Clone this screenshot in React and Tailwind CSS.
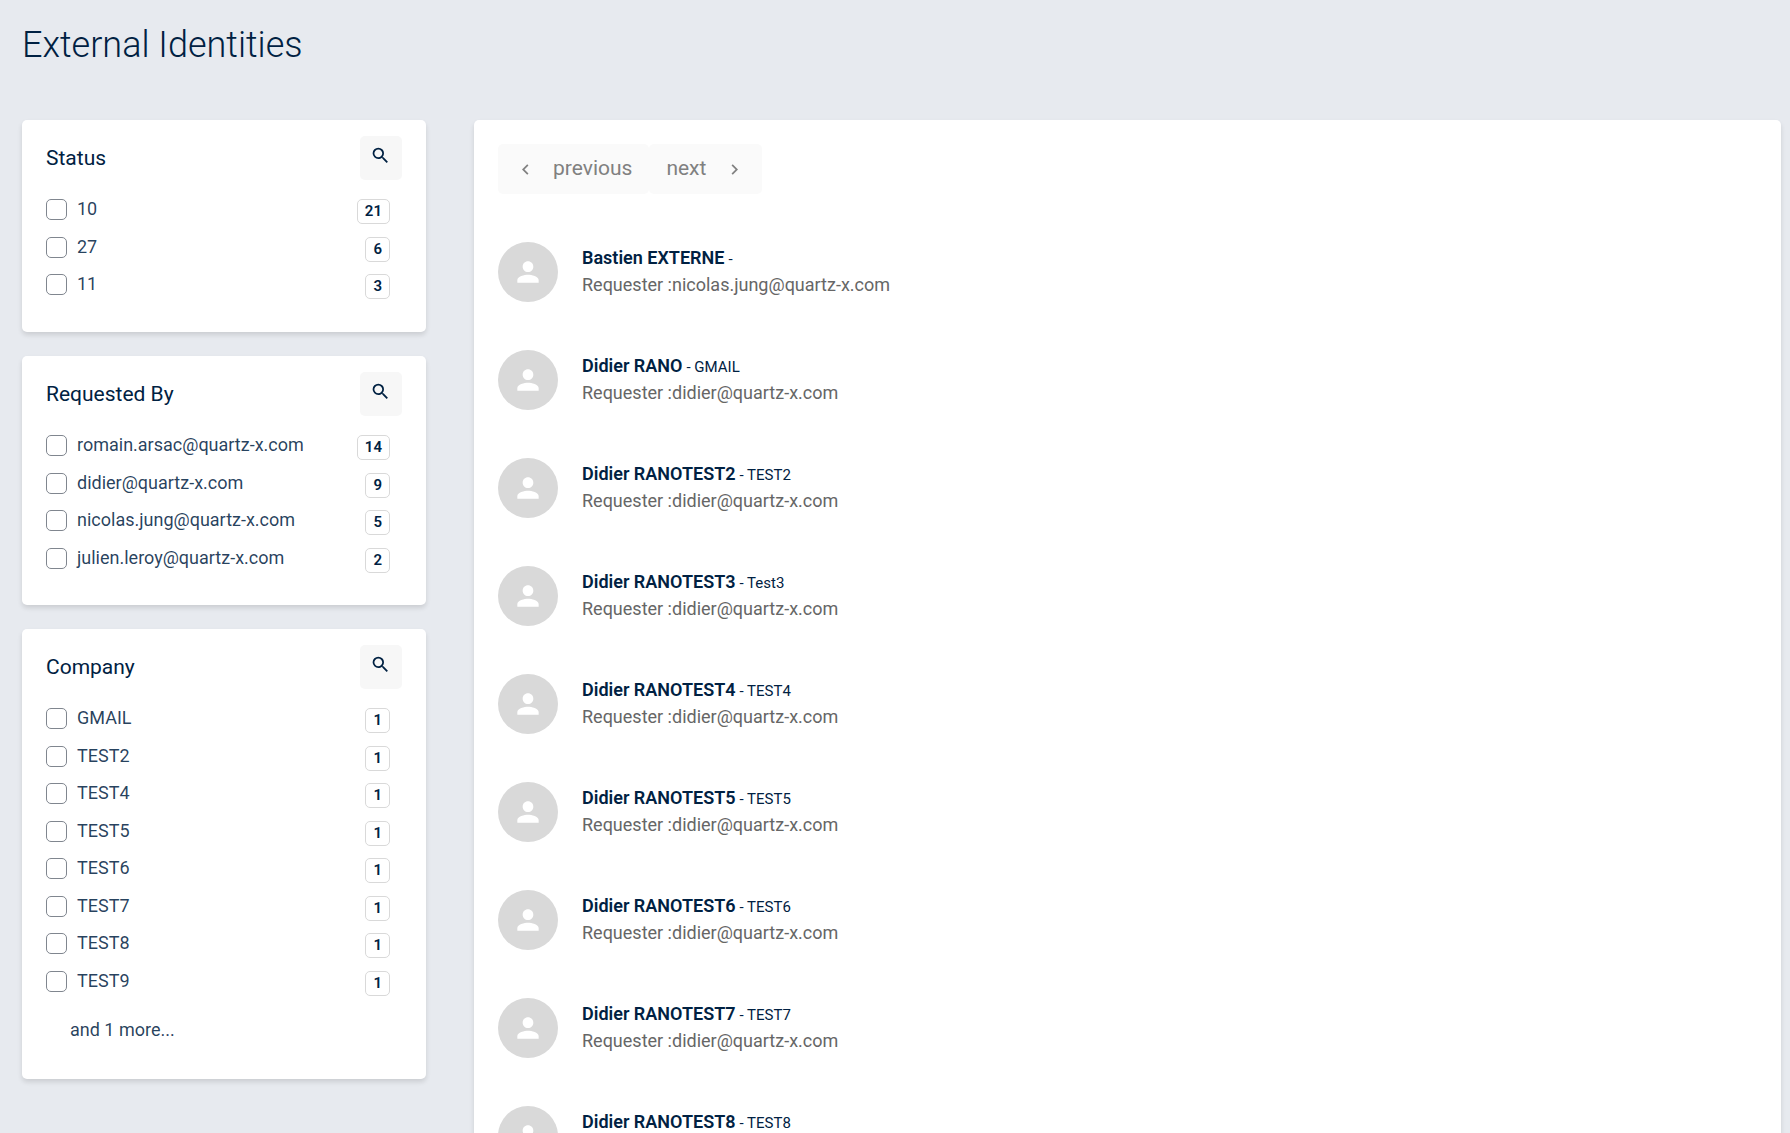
import React, { useState } from 'react';
import { MdSearch, MdPerson, MdChevronLeft, MdChevronRight } from 'react-icons/md';

const facets = [
    {
        title: 'Status',
        values: [
            { name: '10', count: 21 },
            { name: '27', count: 6 },
            { name: '11', count: 3 },
        ],
    },
    {
        title: 'Requested By',
        values: [
            { name: 'romain.arsac@quartz-x.com', count: 14 },
            { name: 'didier@quartz-x.com', count: 9 },
            { name: 'nicolas.jung@quartz-x.com', count: 5 },
            { name: 'julien.leroy@quartz-x.com', count: 2 },
        ],
    },
    {
        title: 'Company',
        values: [
            { name: 'GMAIL', count: 1 },
            { name: 'TEST2', count: 1 },
            { name: 'TEST4', count: 1 },
            { name: 'TEST5', count: 1 },
            { name: 'TEST6', count: 1 },
            { name: 'TEST7', count: 1 },
            { name: 'TEST8', count: 1 },
            { name: 'TEST9', count: 1 },
        ],
        more: 'and 1 more...',
    },
];

const identities = [
    { name: 'Bastien EXTERNE', company: '', requester: 'nicolas.jung@quartz-x.com' },
    { name: 'Didier RANO', company: 'GMAIL', requester: 'didier@quartz-x.com' },
    { name: 'Didier RANOTEST2', company: 'TEST2', requester: 'didier@quartz-x.com' },
    { name: 'Didier RANOTEST3', company: 'Test3', requester: 'didier@quartz-x.com' },
    { name: 'Didier RANOTEST4', company: 'TEST4', requester: 'didier@quartz-x.com' },
    { name: 'Didier RANOTEST5', company: 'TEST5', requester: 'didier@quartz-x.com' },
    { name: 'Didier RANOTEST6', company: 'TEST6', requester: 'didier@quartz-x.com' },
    { name: 'Didier RANOTEST7', company: 'TEST7', requester: 'didier@quartz-x.com' },
    { name: 'Didier RANOTEST8', company: 'TEST8', requester: 'didier@quartz-x.com' },
];

const FacetCard = ({ title, values, more }) => {
    const [selected, setSelected] = useState([]);

    const toggle = (name) => {
        setSelected((prev) => (prev.includes(name) ? prev.filter((n) => n !== name) : [...prev, name]));
    };

    return (
        <section className="bg-white rounded-[5px] shadow-[0_3px_5px_rgba(0,0,0,0.12)] px-6 pt-4 pb-5">
            <div className="flex items-center justify-between">
                <h2 className="text-[21px] leading-7">{title}</h2>
                <button
                    aria-label={`Search ${title}`}
                    className="w-[42px] h-11 pb-[6px] pr-[2px] flex items-center justify-center rounded-[5px] bg-[#f7f7f7] hover:bg-gray-200 cursor-pointer"
                >
                    <MdSearch size={21} />
                </button>
            </div>

            <ul className="mt-[19px]">
                {values.map(({ name, count }) => (
                    <li key={name} className="h-[37px] odd:h-[38px]">
                        <label className="flex items-start pr-3 cursor-pointer">
                            <input
                                type="checkbox"
                                checked={selected.includes(name)}
                                onChange={() => toggle(name)}
                                className="appearance-none shrink-0 w-[21px] h-[21px] rounded-[5px] border border-[#80868f] bg-white checked:bg-[#002142]"
                            />
                            <span className="ml-[10px] flex-1 text-[18px] leading-5 text-[#002142]/85">{name}</span>
                            <span className="h-[25px] px-[7px] flex items-center rounded-[5px] border border-[#d9d9d9] text-[15px] font-semibold">
                                {count}
                            </span>
                        </label>
                    </li>
                ))}
            </ul>

            {more && (
                <button className="mt-[10px] mb-[17px] ml-6 block text-[18px] leading-6 text-[#002142]/85 cursor-pointer">
                    {more}
                </button>
            )}
        </section>
    );
};

const Pager = () => (
    <nav className="flex text-[21px] text-[#808080]">
        <button disabled className="h-[50px] px-[17px] flex items-center gap-[17px] rounded-[5px] bg-[#fafafa]">
            <MdChevronLeft size={21} />
            previous
        </button>
        <button disabled className="h-[50px] px-[17px] flex items-center gap-[18px] rounded-[5px] bg-[#fafafa]">
            next
            <MdChevronRight size={21} />
        </button>
    </nav>
);

const IdentityRow = ({ name, company, requester }) => (
    <li className="flex items-center gap-6">
        <div className="w-[60px] h-[60px] shrink-0 rounded-full bg-[#d9d9d9] flex items-center justify-center">
            <MdPerson size={32} color="white" />
        </div>
        <div className="pb-[2px] text-[18px] leading-[27px]">
            <div className="flex items-baseline gap-1">
                <span className="font-semibold">{name}</span>
                <span className="text-[15px] leading-5">- {company}</span>
            </div>
            <div className="text-[#666666]">Requester :{requester}</div>
        </div>
    </li>
);

const App = () => {
    return (
        <div className="h-screen overflow-hidden bg-[#e7eaef] pl-[22px] pr-[9px] font-['Roboto',sans-serif] text-[#002142]">
            <h1 className="pt-[23px] text-[36px] leading-[44px] font-light">External Identities</h1>

            <div className="mt-[53px] flex items-start gap-12">
                <aside className="w-[404px] shrink-0 flex flex-col gap-6">
                    {facets.map((facet) => (
                        <FacetCard key={facet.title} {...facet} />
                    ))}
                </aside>

                <main className="flex-1 min-w-0 bg-white rounded-[5px] shadow-[0_3px_5px_rgba(0,0,0,0.12)] p-6">
                    <Pager />
                    <ul className="mt-12 flex flex-col gap-12">
                        {identities.map((identity) => (
                            <IdentityRow key={identity.name} {...identity} />
                        ))}
                    </ul>
                </main>
            </div>
        </div>
    );
};

export default App;
